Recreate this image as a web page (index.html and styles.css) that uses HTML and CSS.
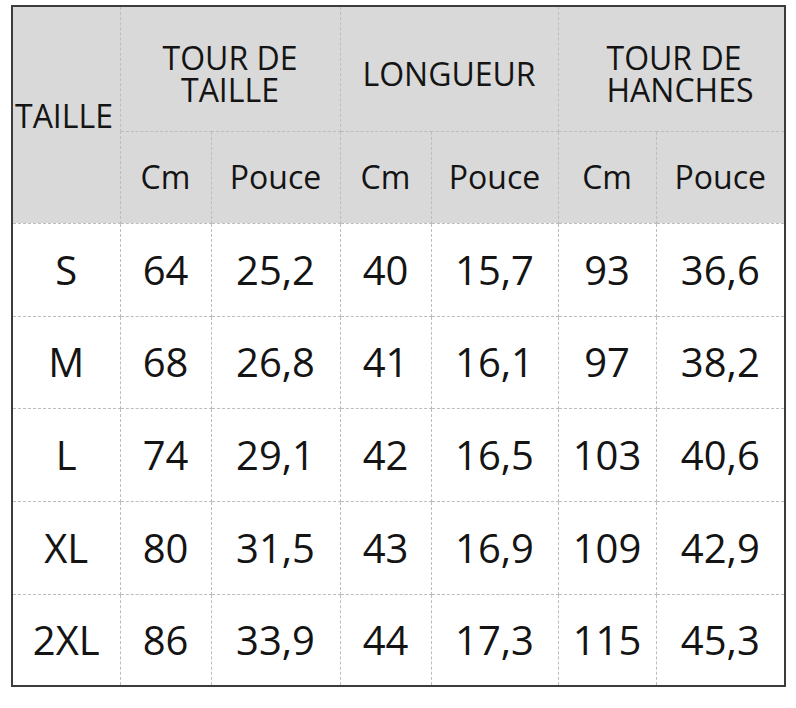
FILE: index.html
```html
<!DOCTYPE html>
<html lang="fr">
<head>
<meta charset="utf-8">
<title>Tableau des tailles</title>
<link rel="stylesheet" href="styles.css">
</head>
<body>
<div class="frame">
  <table class="sizes">
    <colgroup>
      <col class="c1"><col class="c2"><col class="c3"><col class="c4"><col class="c5"><col class="c6"><col class="c7">
    </colgroup>
    <thead>
      <tr class="h1">
        <th rowspan="2" class="size-head">TAILLE</th>
        <th colspan="2">TOUR DE<br>TAILLE</th>
        <th colspan="2">LONGUEUR</th>
        <th colspan="2" class="last hips">TOUR DE<br>HANCHES</th>
      </tr>
      <tr class="h2">
        <th>Cm</th><th>Pouce</th><th>Cm</th><th>Pouce</th><th>Cm</th><th class="last">Pouce</th>
      </tr>
    </thead>
    <tbody>
      <tr class="r1"><td>S</td><td>64</td><td>25,2</td><td>40</td><td>15,7</td><td>93</td><td class="last">36,6</td></tr>
      <tr class="r2"><td>M</td><td>68</td><td>26,8</td><td>41</td><td>16,1</td><td>97</td><td class="last">38,2</td></tr>
      <tr class="r3"><td>L</td><td>74</td><td>29,1</td><td>42</td><td>16,5</td><td>103</td><td class="last">40,6</td></tr>
      <tr class="r4"><td>XL</td><td>80</td><td>31,5</td><td>43</td><td>16,9</td><td>109</td><td class="last">42,9</td></tr>
      <tr class="r5 lastrow"><td>2XL</td><td>86</td><td>33,9</td><td>44</td><td>17,3</td><td>115</td><td class="last">45,3</td></tr>
    </tbody>
  </table>
</div>
</body>
</html>
```

FILE: styles.css
```css
html, body {
  margin: 0;
  padding: 0;
  background: #ffffff;
}

body {
  font-family: "Open Sans", "Noto Sans", "Liberation Sans", sans-serif;
  color: #141414;
}

.frame {
  margin: 5px 0 0 11px;
  width: 771px;
  border: 2px solid #3c3c3c;
}

.sizes {
  width: 771px;
  table-layout: fixed;
  border-collapse: collapse;
  border-spacing: 0;
}

.c1 { width: 107px; }
.c2 { width: 91px; }
.c3 { width: 129px; }
.c4 { width: 91px; }
.c5 { width: 127px; }
.c6 { width: 98px; }
.c7 { width: 128px; }

.sizes th,
.sizes td {
  padding: 0;
  text-align: center;
  vertical-align: middle;
  border-right: 1px dashed #bdbdbd;
  border-bottom: 1px dashed #bdbdbd;
  font-weight: 400;
}

.sizes .last {
  border-right: none;
}

.sizes .lastrow td {
  border-bottom: none;
}

.sizes thead th {
  background: #d9d9d9;
  font-size: 32px;
  line-height: 32px;
}

.h1 { height: 124px; }
.h1 th { padding-top: 10px; }
.h2 { height: 92px; }

.sizes .size-head {
  text-align: left;
  padding-left: 2px;
  padding-top: 3px;
}

.sizes .hips {
  text-align: left;
  padding-left: 48px;
}

.sizes tbody td {
  font-size: 40px;
  line-height: 48px;
}

.r1 { height: 93px; }
.r2 { height: 92px; }
.r3 { height: 93px; }
.r4 { height: 93px; }
.r5 { height: 91px; }
```
